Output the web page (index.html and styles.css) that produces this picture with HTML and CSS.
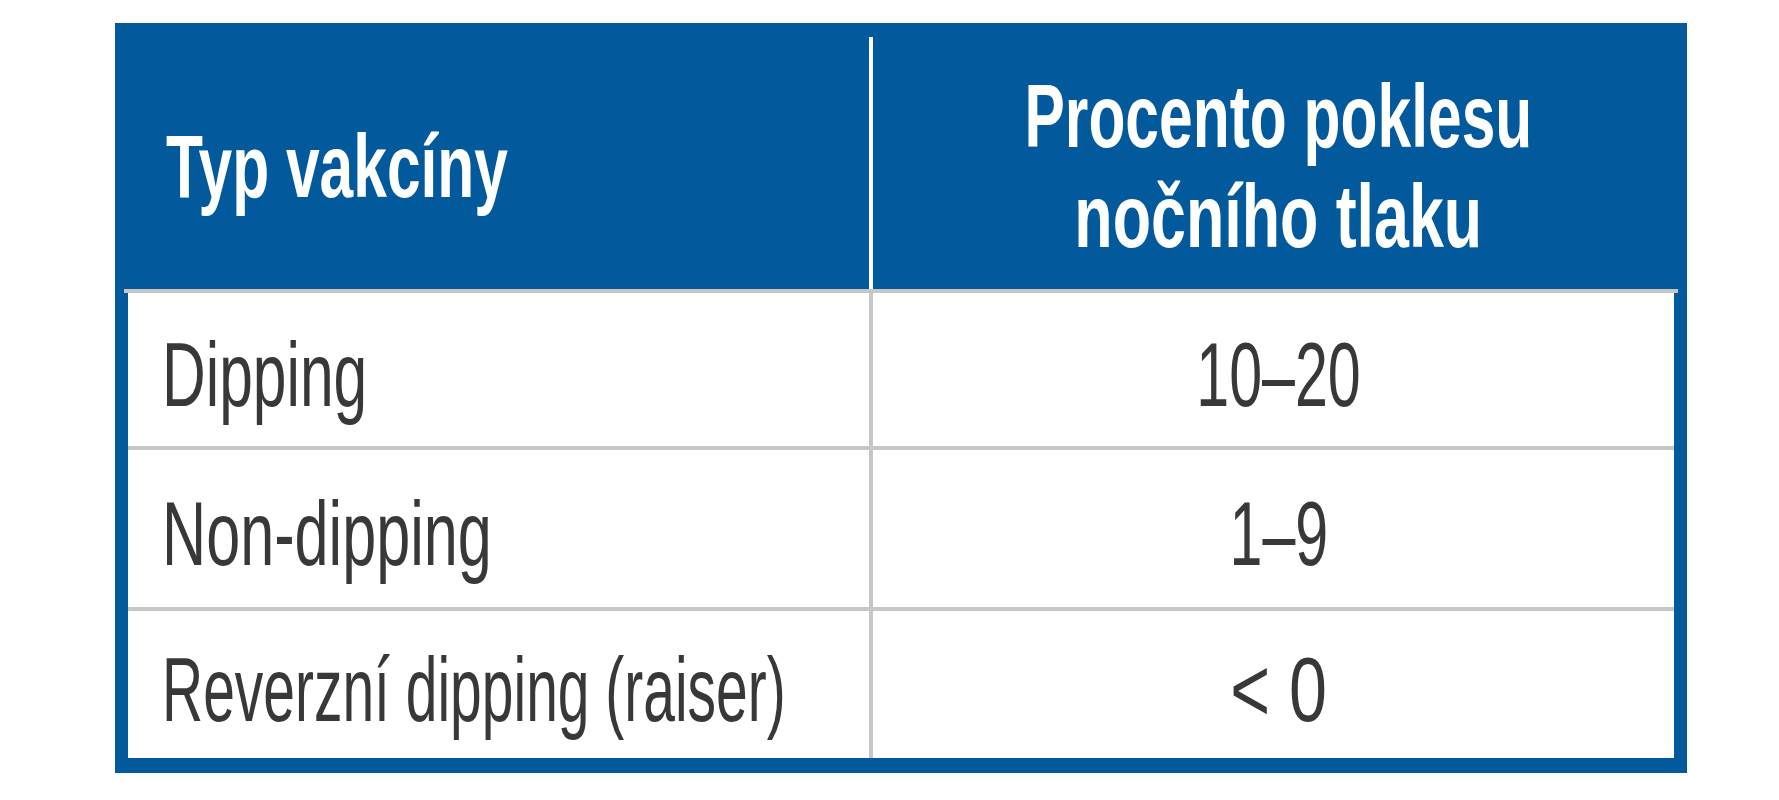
FILE: index.html
```html
<!DOCTYPE html>
<html lang="cs">
<head>
<meta charset="utf-8">
<title>Typ vakcíny</title>
<link rel="stylesheet" href="styles.css">
</head>
<body>
<div class="page">
  <div class="frame">
    <div class="head">
      <div class="hcell"><span class="txt bold">Typ vakcíny</span></div>
      <div class="hdiv"></div>
      <div class="hcell center stack">
        <span class="txt bold">Procento poklesu</span>
        <span class="txt bold wide">nočního tlaku</span>
      </div>
    </div>
    <div class="hline"></div>
    <div class="body">
      <div class="cell r1"><span class="txt s-dip">Dipping</span></div>
      <div class="cell center r1"><span class="txt">10–20</span></div>
      <div class="cell r2"><span class="txt s-non">Non-dipping</span></div>
      <div class="cell center r2"><span class="txt">1–9</span></div>
      <div class="cell r3"><span class="txt s-rev">Reverzní dipping (raiser)</span></div>
      <div class="cell center r3"><span class="txt s-lt">&lt; 0</span></div>
    </div>
  </div>
</div>
</body>
</html>
```

FILE: styles.css
```css
html, body {
  margin: 0;
  padding: 0;
  background: #ffffff;
}

.page {
  padding: 23px 0 0 115px;
}

.frame {
  width: 1572px;
  box-sizing: border-box;
  background: #02599b;
  padding: 0 13px 15px 13px;
  font-family: "Liberation Sans", Arial, sans-serif;
}

.head {
  display: grid;
  grid-template-columns: 741px 4px 801px;
  height: 266px;
}

.hcell {
  display: flex;
  align-items: center;
  padding: 20px 0 0 38px;
  color: #ffffff;
  font-size: 89px;
  line-height: 100px;
}

.hcell.stack {
  flex-direction: column;
  justify-content: center;
  align-items: center;
}

.hdiv {
  background: #ffffff;
  margin-top: 14px;
}

.hline {
  height: 4px;
  background: #c6c6c6;
  margin: 0 -4px;
}

.body {
  display: grid;
  grid-template-columns: 741px 801px;
  grid-template-rows: 153px 157px 147px;
  column-gap: 4px;
  row-gap: 4px;
  background: #c6c6c6;
}

.cell {
  background: #ffffff;
  display: flex;
  align-items: center;
  padding: 10px 0 0 34px;
  color: #383838;
  font-size: 91px;
  line-height: 100px;
}

.center {
  justify-content: center;
  padding-left: 10px;
  text-align: center;
}

.txt {
  display: inline-block;
  white-space: nowrap;
  transform: scaleX(0.65);
  transform-origin: left center;
}

.center .txt {
  transform-origin: center center;
}

.bold {
  font-weight: bold;
  transform: scaleX(0.68);
}

.bold.wide {
  transform: scaleX(0.705);
}

.s-dip {
  transform: scaleX(0.665);
}

.s-non {
  transform: scaleX(0.672);
}

.s-rev {
  transform: scaleX(0.626);
}

.s-lt {
  transform: scaleX(0.75);
}
```
